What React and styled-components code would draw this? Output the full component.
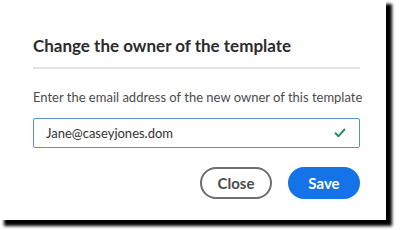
import React from 'react'
import styled, { createGlobalStyle } from 'styled-components'

const Global = createGlobalStyle`
  html, body { margin: 0; padding: 0; background: #fff; }
  body { font-family: Lato, "Open Sans", sans-serif; }
`

const Page = styled.div`
  width: 400px;
  height: 230px;
  overflow: hidden;
  background: #fff;
`

const Card = styled.div`
  width: 386px;
  height: 220px;
  box-sizing: border-box;
  background: #fff;
  padding: 0 26px 0 33px;
  box-shadow: 5px 5px 3px 1px #000;
  display: flex;
  flex-direction: column;
`

const Title = styled.h2`
  margin: 34px 0 0;
  font-size: 17px;
  line-height: 24px;
  font-weight: 700;
  color: #2c2c2c;
`

const Divider = styled.hr`
  margin: 9px 0 0;
  border: none;
  height: 2px;
  background: #e1e1e1;
`

const Label = styled.p`
  margin: 18px 0 0;
  font-size: 13px;
  line-height: 20px;
  white-space: nowrap;
  color: #4b4b4b;
`

const Field = styled.div`
  margin-top: 11px;
  height: 30px;
  box-sizing: border-box;
  border: 1px solid #5c8fd6;
  border-radius: 2px;
  display: flex;
  align-items: center;
  padding: 0 13px 0 12px;
`

const Value = styled.span`
  flex: 1;
  font-size: 13px;
  color: #323232;
`

const Actions = styled.div`
  margin-top: 19px;
  display: flex;
  justify-content: flex-end;
  gap: 16px;
`

const Button = styled.button`
  width: 72px;
  height: 32px;
  box-sizing: border-box;
  border-radius: 16px;
  font-family: Lato, "Open Sans", sans-serif;
  font-size: 15px;
  font-weight: 700;
  border: 2px solid ${p => (p.$primary ? '#1473e6' : '#6e6e6e')};
  background: ${p => (p.$primary ? '#1473e6' : '#fff')};
  color: ${p => (p.$primary ? '#fff' : '#4b4b4b')};
  padding: 0;
`

const Check = () => (
  <svg width="12" height="10" viewBox="0 0 12 10">
    <path d="M1.5 5.2 L4.5 8.2 L10.5 1.5" fill="none" stroke="#268e6c" strokeWidth="2" strokeLinecap="round" strokeLinejoin="round" />
  </svg>
)

export default function App() {
  return (
    <Page>
      <Global />
      <Card>
        <Title>Change the owner of the template</Title>
        <Divider />
        <Label>Enter the email address of the new owner of this template</Label>
        <Field>
          <Value>Jane@caseyjones.dom</Value>
          <Check />
        </Field>
        <Actions>
          <Button>Close</Button>
          <Button $primary>Save</Button>
        </Actions>
      </Card>
    </Page>
  )
}
